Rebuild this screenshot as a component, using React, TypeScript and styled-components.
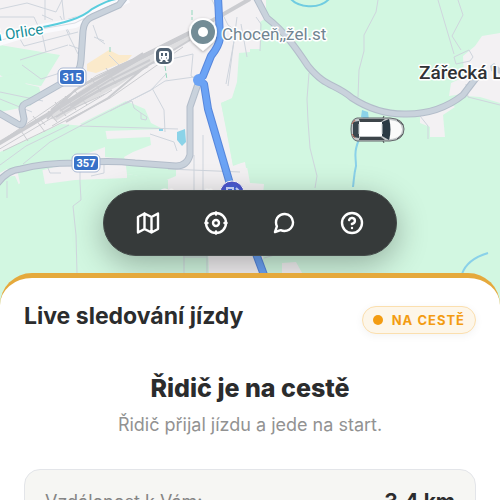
import React from "react";
import styled, { createGlobalStyle } from "styled-components";

const GlobalStyle = createGlobalStyle`
  *, *::before, *::after { box-sizing: border-box; }
  body { margin: 0; background: #fff; font-family: Inter, "Liberation Sans", sans-serif; }
`;

const Screen = styled.main`
  display: flex;
  flex-direction: column;
  height: 100vh;
  overflow: hidden;
`;

const MapArea = styled.section`
  position: relative;
  display: flex;
  flex: none;
  justify-content: center;
  align-items: flex-end;
  height: 320px;
  padding-bottom: 64px;
`;

const MapDrawing = styled.svg`
  position: absolute;
  inset: 0;
  width: 100%;
  height: 100%;
`;

const MapText = styled.text<{ $size: number; $fill: string; $weight?: number }>`
  font-family: Roboto, "Liberation Sans", sans-serif;
  font-size: ${(p) => p.$size}px;
  font-weight: ${(p) => p.$weight ?? 400};
  fill: ${(p) => p.$fill};
  stroke: #fff;
  stroke-width: 3px;
  stroke-linejoin: round;
  paint-order: stroke;
`;

const ShieldText = styled.text`
  font-family: Roboto, "Liberation Sans", sans-serif;
  font-size: 11px;
  font-weight: 700;
  fill: #fff;
  text-anchor: middle;
`;

const Toolbar = styled.nav`
  position: relative;
  display: flex;
  padding: 8px 10px;
  border: 1px solid #444a49;
  border-radius: 33px;
  background: #363a3a;
  box-shadow: 0 8px 32px rgba(0, 0, 0, 0.3);
`;

const ToolButton = styled.button`
  display: grid;
  place-items: center;
  width: 68px;
  height: 48px;
  padding: 0;
  border: 0;
  border-radius: 24px;
  background: none;
  color: #fff;
  cursor: pointer;
`;

const Panel = styled.section`
  position: relative;
  flex: none;
  margin-top: -47px;
  padding: 24px;
  border-top: 5px solid #e5a93c;
  border-radius: 32px 32px 0 0;
  background: #fff;
  color: #2b2c2d;
`;

const PanelHeader = styled.header`
  display: flex;
  justify-content: space-between;
  align-items: flex-start;
`;

const Title = styled.h1`
  margin: 0;
  font-size: 23px;
  font-weight: 700;
  line-height: 28px;
`;

const Badge = styled.span`
  display: flex;
  align-items: center;
  gap: 9px;
  height: 28px;
  margin-top: 4px;
  padding: 0 10px;
  border: 1px solid #fbdfae;
  border-radius: 14px;
  background: #fdf6e9;
  box-shadow: 0 2px 8px rgba(0, 0, 0, 0.05);
  color: #f39c12;
  font-size: 13px;
  font-weight: 700;
  letter-spacing: 1px;
`;

const Dot = styled.i`
  width: 10px;
  height: 10px;
  border-radius: 50%;
  background: #f39c12;
`;

const Status = styled.div`
  margin-top: 38px;
  text-align: center;
`;

const StatusTitle = styled.h2`
  margin: 0;
  font-size: 25px;
  font-weight: 800;
  line-height: 32px;
`;

const StatusText = styled.p`
  margin: 8px 0 0;
  color: #929292;
  font-size: 18px;
  line-height: 26px;
`;

const Details = styled.dl`
  margin: 31px 0 0;
  padding: 20px;
  border: 1px solid #e3e5e9;
  border-radius: 16px;
  background: #f6f6f3;
`;

const DetailRow = styled.div`
  display: flex;
  justify-content: space-between;
  align-items: center;
  line-height: 24px;
`;

const DetailLabel = styled.dt`
  color: #858585;
  font-size: 18px;
`;

const DetailValue = styled.dd`
  margin: 0;
  font-size: 21px;
  font-weight: 700;
`;

const ToolIcon = ({ children }: { children: React.ReactNode }) => (
  <svg
    width="24"
    height="24"
    viewBox="0 0 24 24"
    fill="none"
    stroke="currentColor"
    strokeWidth="2.4"
    strokeLinecap="round"
    strokeLinejoin="round"
    aria-hidden="true"
  >
    {children}
  </svg>
);

const Shield = ({ x, y, label }: { x: number; y: number; label: string }) => (
  <g>
    <rect x={x - 14} y={y - 9} width="28" height="18" rx="5" fill="#fff" stroke="#a9b7d2" />
    <rect x={x - 12} y={y - 7} width="24" height="14" rx="3" fill="#3871c8" />
    <ShieldText x={x} y={y + 4}>{label}</ShieldText>
  </g>
);

const mainRoads =
  "M-3 112L16 123Q23 128 24 119L22 109Q22 104 29 102L71 78Q80 74 81 60L83 31Q84 20 92 17L119 5L125 -3M-3 184Q7 170 21 169Q43 163 75 163Q110 160 135 163L176 166Q187 166 190 155V107L199 81M256 -3L267 18C285 32 296 48 308 66C326 88 334 83 352 98Q378 115 407 114Q439 114 463 95L476 78";

const route = "M218 -3L220 38Q219 46 211 56L203 76L198 80L204 84L208 109L230 184L264 275";

const TownMap = () => (
  <MapDrawing viewBox="0 0 500 320" preserveAspectRatio="xMidYMin slice" role="img" aria-label="Mapa">
    <defs>
      <radialGradient id="stop"><stop offset="0" stopColor="#3971e8" /><stop offset="1" stopColor="#5052c9" /></radialGradient>
      <filter id="shade" x="-30%" y="-30%" width="160%" height="160%"><feDropShadow dx="0" dy="1" stdDeviation="1.5" floodOpacity=".35" /></filter>
    </defs>
    <rect width="500" height="320" fill="#d2f7e1" />
    <g fill="#f3f1f3">
      <path d="M0 0H266V18L260 22V49H250V52L239 53L237 82L232 98L221 103L226 127L233 166L246 161L250 183L264 184L262 205H168V180L127 174V178L75 180L45 184L42 168L17 169L20 183L9 196V206L0 203V124H18L20 134L0 141V78L34 85L41 86L60 55L0 45Z" />
      <path d="M0 38V75L13 83L34 87L41 94L54 98L32 114H0ZM184 182V320H211L208 251H263V282H282V263L296 262L306 280V320H184Z" />
      <path d="M500 103L480 97L466 96L463 94L449 96L451 83L464 77L463 56L475 46L482 36L500 33ZM420 113L450 103L455 107L443 115L445 137H430V127L420 123Z" />
    </g>
    <g fill="#d2f7e1">
      <path d="M0 77L18 73L26 84L39 87L41 94L30 106L0 112ZM0 152L61 124L85 126L105 128L107 139L150 137L151 145L133 152L124 157L127 165L176 165V176L164 181L150 178L127 174L125 159L105 157V147L75 158L51 168L28 174L7 169L0 173Z" />
      <path d="M80 124L126 101L145 109L151 123L163 129L105 131ZM0 39L5 41L3 45L0 45ZM20 158L45 150L54 149L29 168H0ZM0 177L15 176L20 187L10 199V206H0Z" />
      <path d="M221 103L232 99L241 83L264 82V168H246L245 162L233 165Z" />
    </g>
    <path d="M87 64L109 50L119 55L132 55L127 61L96 73L87 71Z" fill="#fbeacb" />
    <path d="M177 132L185 129L186 142L182 146L177 140ZM362 110L368 112L369 120L361 117ZM159 128H163V131H159Z" fill="#8bd3e8" />
    <path d="M490 66L494 63L500 68V74L491 71Z" fill="#c9d2d9" />

    <g fill="none" stroke="#cfd5dd" strokeWidth="1">
      <path d="M0 17L34 17L39 28L79 16L115 0M0 9L27 3L56 12L62 0M20 39L24 46L78 32M20 60L68 45M22 65L41 79L60 73M45 0V20M62 0L65 27L70 38L78 54M40 24L46 52M60 16L70 34M42 15L53 20M93 25L98 39L105 44M109 55L127 73M94 37L104 41M69 45L80 49" />
      <path d="M152 88L164 110L165 132M193 54L191 76L201 82M221 11L228 25L236 31L226 84M241 24L247 57M237 17L234 40L228 86M0 92L43 101M0 99L32 112M165 81L194 77M80 126L151 90L165 81M150 64L193 54M110 111L151 90L166 74M80 126L178 129M122 105L132 101L134 108L141 113M141 113L147 117L146 120L141 119Z" />
      <path d="M48 168L50 173H61M104 165V173L91 176M80 170V182L81 200L73 206L76 235L77 273M168 169L240 172M203 135V205M194 155V205M177 151L174 142L150 134M0 165L26 146L69 125M23 164L50 142L82 125M7 181L7 198M212 0L216 8L221 8" />
      <path d="M378 0L376 12L364 35L364 51L359 70L358 97M309 73L307 99L308 121L310 148L317 176L315 188M438 0L454 54M458 0L463 15L452 36L461 50M256 17L261 24L260 51M184 251V273M207 251V273M454 57L469 50L473 57L470 61L456 64ZM466 84L468 97L500 105M420 116L428 126V139M183 257H207M278 254L264 258" />
    </g>

    <path d="M-5 42L35 30L75 23L105 8L128 -2" fill="none" stroke="#fafafd" strokeWidth="10" />
    <path d="M-5 42L35 30L75 23L105 8L128 -2" fill="none" stroke="#dadde3" strokeWidth="1" />
    <path d="M38 28C65 23 82 18 92 9C101 4 108 0 116 -1" fill="none" stroke="#5acddd" strokeWidth="2" />
    <path d="M290 -2C297 7 319 11 330 -2" fill="none" stroke="#70cce1" strokeWidth="2" />
    <path d="M360 137C353 153 356 157 356 166C354 174 354 179 353 187M462 274C466 262 478 256 488 253" fill="none" stroke="#8ad1e9" strokeWidth="2" />

    <path d="M50 117L70 98L100 76L140 56L190 34L194 38L150 64L118 86L80 106L56 121Z" fill="#dedee0" />
    <g fill="none" stroke="#cbccd0">
      <path d="M-2 144L47 115L93 86L136 60L194 31L250 -1" strokeWidth="4" />
      <path d="M51 110L82 85L137 58L189 32M56 117L101 89L137 72L190 40M47 119L75 90L119 66L183 37M66 122L108 98L145 67M83 85L121 67L143 53" strokeWidth="2" />
      <path d="M62 104L104 78L150 54L186 36M60 111L110 80L150 60M70 106L112 84L148 66" strokeWidth="2" />
      <path d="M-2 150L50 119L105 94M0 142L57 103L96 76L182 37M3 151L51 128L110 98L183 47M52 126L112 90" strokeWidth="1" />
      <path d="M40 119L45 125M48 111L57 122M55 102L66 116M65 96L76 110M75 91L87 105M91 78L101 92M106 68L116 84M33 116L45 132M19 128L28 141" strokeWidth="1" />
    </g>
    <g fill="none" strokeLinecap="round" strokeLinejoin="round">
      <path d={mainRoads} stroke="#b3bdca" strokeWidth="7" />
      <path d={mainRoads} stroke="#c9d2dc" strokeWidth="5" />
    </g>
    <path d={route} fill="none" stroke="#5787dc" strokeWidth="8" strokeLinejoin="round" />
    <path d={route} fill="none" stroke="#6ba3f5" strokeWidth="6" strokeLinejoin="round" />
    <circle cx="199" cy="80" r="6" fill="#6ba3f5" />

    <path d="M192 10V20M110 47V54M165 66L167 80" stroke="#93d8bd" strokeDasharray="5 2" />
    <Shield x={72} y={77} label="315" />
    <Shield x={86} y={163} label="357" />

    <g filter="url(#shade)">
      <path d="M203 51L196 45Q189 40 189 32A14 14 0 1 1 217 32Q217 40 210 45Z" fill="#fff" />
    </g>
    <circle cx="203" cy="32" r="12" fill="#738c96" />
    <circle cx="203" cy="32" r="5" fill="#fff" />

    <rect x="155" y="47" width="18" height="18" rx="6" fill="#506171" stroke="#fff" strokeWidth="2" />
    <path d="M161 51H167Q169 51 169 53V58Q169 60 167 60L169 62H166L165 60H163L162 62H159L161 60Q159 60 159 58V53Q159 51 161 51Z" fill="#fff" />
    <path d="M161 53H163V56H161ZM165 53H167V56H165Z" fill="#506171" />
    <path d="M161 58H162M166 58H167" stroke="#506171" strokeWidth="1" />

    <MapText x="222" y="40" $size={17} $fill="#718591">Choceň,,žel.st</MapText>
    <MapText x="419" y="79" $size={19} $fill="#303235" $weight={500}>Zářecká Lhota</MapText>
    <MapText x="-14" y="43" $size={15} $fill="#168f9a" transform="rotate(-9 -14 43)">há Orlice</MapText>
    <MapText x="159" y="202" $size={16} $fill="#5367ad">Choceň</MapText>
    <circle cx="232" cy="193" r="12" fill="url(#stop)" stroke="#fff" strokeWidth="1" />
    <path d="M227 188H233V194H227ZM236 188L239 191M238 190V195" fill="none" stroke="#cfd9ff" strokeWidth="2" />

    <g strokeLinejoin="round">
      <path d="M357 118H390Q404 119 404 129Q404 140 390 141H357Q351 140 351 129Q351 119 357 118Z" fill="#c3c7c9" stroke="#63676a" strokeWidth="1" />
      <path d="M390 120Q402 121 402 129Q402 138 390 139Q387 129 390 120Z" fill="#fafafa" />
      <path d="M353 122L359 121V138L353 137Z" fill="#3a464e" />
      <path d="M382 122L389 119Q392 129 389 140L382 136Z" fill="#2b3a44" />
      <path d="M359 119H385L381 122H360ZM360 137H381L385 140H359Z" fill="#3d454a" />
      <path d="M359 122H382V136H359Z" fill="#fff" />
      <path d="M359 124V134M382 124V134" stroke="#cfd3d5" strokeWidth="1" />
      <path d="M383 118L384 116M383 141L384 143M397 120L403 125M397 139L403 134" stroke="#4c5154" strokeWidth="1" />
      <path d="M352 134L355 138M352 124L355 120" stroke="#c4705c" strokeWidth="1" />
    </g>
  </MapDrawing>
);

export default function App() {
  return (
    <>
      <GlobalStyle />
      <Screen>
        <MapArea>
          <TownMap />
          <Toolbar aria-label="Ovládání mapy">
            <ToolButton aria-label="Mapa">
              <ToolIcon>
                <path d="M2 6V21.5L8.5 18L15.5 21.5L22 18V2.5L15.5 6L8.5 2.5ZM8.5 2.5V18M15.5 6V21.5" />
              </ToolIcon>
            </ToolButton>
            <ToolButton aria-label="Moje poloha">
              <ToolIcon>
                <circle cx="12" cy="12" r="10" />
                <circle cx="12" cy="12" r="3" />
                <path d="M12 1.5v2M12 20.5v2M1.5 12h2M20.5 12h2" />
              </ToolIcon>
            </ToolButton>
            <ToolButton aria-label="Zprávy">
              <ToolIcon>
                <path d="M21 11.5a8.38 8.38 0 0 1-.9 3.8 8.5 8.5 0 0 1-7.6 4.7 8.38 8.38 0 0 1-3.8-.9L3 21l1.9-5.7a8.38 8.38 0 0 1-.9-3.8 8.5 8.5 0 0 1 4.7-7.6 8.38 8.38 0 0 1 3.8-.9h.5a8.48 8.48 0 0 1 8 8v.5z" />
              </ToolIcon>
            </ToolButton>
            <ToolButton aria-label="Nápověda">
              <ToolIcon>
                <circle cx="12" cy="12" r="10" />
                <path d="M9.09 9a3 3 0 0 1 5.83 1c0 2-3 3-3 3M12 17h.01" />
              </ToolIcon>
            </ToolButton>
          </Toolbar>
        </MapArea>
        <Panel>
          <PanelHeader>
            <Title>Live sledování jízdy</Title>
            <Badge><Dot />NA CESTĚ</Badge>
          </PanelHeader>
          <Status>
            <StatusTitle>Řidič je na cestě</StatusTitle>
            <StatusText>Řidič přijal jízdu a jede na start.</StatusText>
          </Status>
          <Details>
            <DetailRow>
              <DetailLabel>Vzdálenost k Vám:</DetailLabel>
              <DetailValue>3,4 km</DetailValue>
            </DetailRow>
          </Details>
        </Panel>
      </Screen>
    </>
  );
}
